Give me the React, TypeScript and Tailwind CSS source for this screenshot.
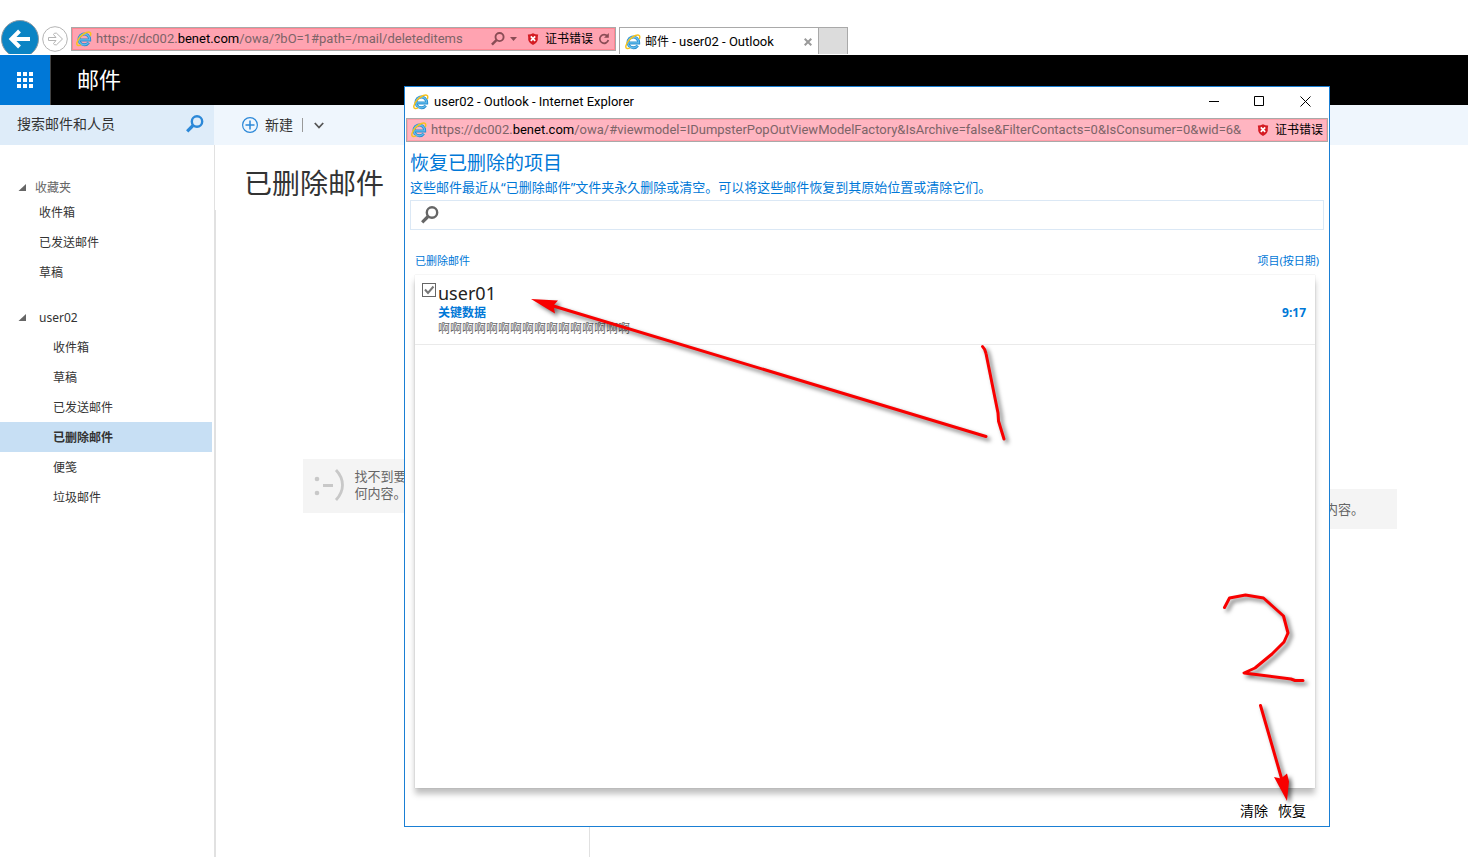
import { useState } from "react";

interface Folder {
  id: string;
  name: string;
}

const favorites: Folder[] = [
  { id: "fav-inbox", name: "收件箱" },
  { id: "fav-sent", name: "已发送邮件" },
  { id: "fav-drafts", name: "草稿" },
];

const mailFolders: Folder[] = [
  { id: "inbox", name: "收件箱" },
  { id: "drafts", name: "草稿" },
  { id: "sent", name: "已发送邮件" },
  { id: "deleted", name: "已删除邮件" },
  { id: "notes", name: "便笺" },
  { id: "junk", name: "垃圾邮件" },
];

const IeLogo = () => (
  <svg className="h-4 w-4 shrink-0" viewBox="0 0 16 16" fill="none">
    <path
      d="M3.800 8.900H13.700A5.400 5.400 0 1 0 12.700 11.600"
      stroke="#2a8fd0"
      strokeWidth="3"
    />
    <path
      d="M3.800 8.900H13.600A5.400 5.400 0 1 0 12.500 11.700"
      stroke="#63bdec"
      strokeWidth="1.300"
    />
    <path
      d="M14.300 5C15.600 1.600 14 .2 10.400 1.500 6 3.200 1.800 8 .9 11.800.4 14.600 2.400 15.200 5 13.800"
      stroke="#f6c21f"
      strokeWidth="1.500"
    />
  </svg>
);

const ShieldIcon = () => (
  <svg className="h-3 w-3 shrink-0" viewBox="0 0 12 12">
    <path
      d="M.8 1.500Q3.500 1.600 6 .2 8.500 1.600 11.200 1.500L10.800 4Q11.500 9.500 6 12 .5 9.500 1.200 4Z"
      fill="#d41c24"
    />
    <path d="M3.800 3.400l4.400 4.400M8.200 3.400l-4.400 4.400" stroke="#fff" strokeWidth="1.700" />
  </svg>
);

const SearchIcon = ({ className }: { className: string }) => (
  <svg className={className} viewBox="0 0 18 18" fill="none">
    <circle cx="11" cy="6.500" r="5.200" stroke="currentColor" strokeWidth="2.400" />
    <path d="M7 10.500L1.200 16.300" stroke="currentColor" strokeWidth="3.200" />
  </svg>
);

const Triangle = () => (
  <svg className="h-2 w-2 shrink-0" viewBox="0 0 8 8">
    <path d="M8 0v7H.5Z" fill="#666" />
  </svg>
);

const BrowserBar = () => (
  <header className="flex h-[55px] items-start overflow-hidden border-b border-white bg-white pt-[27px] text-[13px]">
    <button type="button" aria-label="后退" className="-mt-2 w-10 shrink-0">
      <svg className="h-10 w-10" viewBox="0 0 40 40" fill="none">
        <circle cx="20" cy="20" r="18.500" fill="#0b84c4" stroke="#8c9aa3" />
        <path
          d="M30 20H12M19.500 12L11.500 20l8 8"
          stroke="#fff"
          strokeWidth="4"
        />
      </svg>
    </button>
    <button type="button" aria-label="前进" className="-mt-px ml-0.5 shrink-0">
      <svg className="h-[26px] w-[26px]" viewBox="0 0 26 26" fill="none">
        <circle cx="13" cy="13" r="12.300" stroke="#b4b4b4" />
        <path
          d="M6.500 11.500h7.500L11.500 8.500 12.500 7.200h2L20.500 13l-6 5.800h-2l-1-1.300L14 14.500H6.500Z"
          stroke="#b4b4b4"
        />
      </svg>
    </button>
    <div className="ml-[3px] flex h-6 w-[545px] items-center border border-[#a9a9a9] bg-[#ffa3b1] pl-1 pr-[5px] shadow-[inset_0_0_0_1px_#ff8793]">
      <IeLogo />
      <span className="ml-1 flex-1 whitespace-nowrap font-[Roboto] text-[#7d6468]">
        https://dc002.<span className="text-black">benet.com</span>
        /owa/?bO=1#path=/mail/deleteditems
      </span>
      <button type="button" aria-label="搜索">
        <SearchIcon className="h-[14px] w-[14px] text-[#8a4c55]" />
      </button>
      <svg className="ml-[5px] mr-[10px] h-1 w-[7px]" viewBox="0 0 7 4">
        <path d="M0 0h7L3.500 4Z" fill="#8a4c55" />
      </svg>
      <ShieldIcon />
      <span className="ml-[6px] mr-[5px] text-xs text-black">证书错误</span>
      <button type="button" aria-label="刷新">
        <svg className="h-3 w-3" viewBox="0 0 12 12" fill="none">
          <path
            d="M9.500 3.300A4.300 4.300 0 1 0 10.300 7"
            stroke="#8a4c55"
            strokeWidth="1.700"
          />
          <path d="M10.800 0v4.800H6Z" fill="#8a4c55" />
        </svg>
      </button>
    </div>
    <div className="ml-[3px] flex h-7 w-[200px] items-center border border-b-0 border-[#a9a9a9] pl-[5px] pr-[6px]">
      <IeLogo />
      <span className="ml-1 flex-1 font-[Roboto,'Noto_Sans_CJK_SC',sans-serif] text-black">
        <span className="text-xs">邮件</span> - user02 - Outlook
      </span>
      <button type="button" aria-label="关闭标签页">
        <svg className="h-2 w-2" viewBox="0 0 8 8">
          <path d="M.7.7l6.600 6.600M7.300.7L.7 7.300" stroke="#9a9a9a" strokeWidth="2" />
        </svg>
      </button>
    </div>
    <button
      type="button"
      aria-label="新建标签页"
      className="h-7 w-[29px] border border-b-0 border-l-0 border-[#a9a9a9] bg-[#dcdcdc]"
    />
  </header>
);

const Sidebar = () => {
  const [selected, setSelected] = useState("deleted");

  return (
    <nav className="w-[212px] pt-8 text-xs text-[#333]">
      <div className="flex h-5 items-center pl-[18px] pt-px text-[#666]">
        <Triangle />
        <span className="ml-[9px]">收藏夹</span>
      </div>
      {favorites.map((folder) => (
        <button
          key={folder.id}
          type="button"
          onClick={() => setSelected(folder.id)}
          className={`flex h-[30px] w-full items-center pl-[39px] pt-0.5 ${
            selected === folder.id ? "bg-[#c7dff4] font-bold" : ""
          }`}
        >
          {folder.name}
        </button>
      ))}
      <div className="mt-[15px] flex h-[30px] items-center pl-[18px] pt-0.5">
        <Triangle />
        <span className="ml-[13px]">user02</span>
      </div>
      {mailFolders.map((folder) => (
        <button
          key={folder.id}
          type="button"
          onClick={() => setSelected(folder.id)}
          className={`flex h-[30px] w-full items-center pl-[53px] pt-0.5 ${
            selected === folder.id ? "bg-[#c7dff4] font-bold" : ""
          }`}
        >
          {folder.name}
        </button>
      ))}
    </nav>
  );
};

const RecoverWindow = () => {
  const [checked, setChecked] = useState(true);

  return (
    <section className="absolute left-[404px] right-[138px] top-[86px] flex h-[741px] flex-col border border-[#1a7fd4] bg-white">
      <div className="flex h-[31px] shrink-0 items-center pb-0.5 pl-2 text-[13px] text-black">
        <IeLogo />
        <span className="ml-[5px] flex-1 font-[Roboto]">
          user02 - Outlook - Internet Explorer
        </span>
        <div className="flex">
          <button
            type="button"
            aria-label="最小化"
            className="flex h-[29px] w-[45px] items-center justify-center"
          >
            <svg className="h-[11px] w-[11px]" viewBox="0 0 11 11">
              <path d="M0 5.500h10" stroke="#000" />
            </svg>
          </button>
          <button
            type="button"
            aria-label="最大化"
            className="flex h-[29px] w-[45px] items-center justify-center"
          >
            <svg className="h-[11px] w-[11px]" viewBox="0 0 11 11" fill="none">
              <path d="M.5.5h9v9h-9Z" stroke="#000" />
            </svg>
          </button>
          <button
            type="button"
            aria-label="关闭"
            className="flex h-[29px] w-[47px] items-center justify-center"
          >
            <svg className="h-[11px] w-[11px]" viewBox="0 0 11 11">
              <path d="M.5.5l10 10M10.500.5l-10 10" stroke="#000" />
            </svg>
          </button>
        </div>
      </div>

      <div className="mx-px flex h-6 shrink-0 items-center border border-[#a9a9a9] bg-[#ffb5c1] pl-1 pr-1 text-[13px] shadow-[inset_0_0_0_1px_#ff9faa]">
        <IeLogo />
        <span className="ml-1 flex-1 whitespace-nowrap font-[Roboto] text-[#7d6468]">
          https://dc002.<span className="text-black">benet.com</span>
          /owa/#viewmodel=IDumpsterPopOutViewModelFactory&amp;IsArchive=false&amp;FilterContacts=0&amp;IsConsumer=0&amp;wid=6&amp;
        </span>
        <ShieldIcon />
        <span className="ml-[6px] text-xs text-black">证书错误</span>
      </div>

      <div className="flex flex-1 flex-col px-[5px] text-[#0078d7]">
        <h2 className="mt-2 text-[19px] leading-[27px]">恢复已删除的项目</h2>
        <p className="text-[13px] leading-5">
          这些邮件最近从“已删除邮件”文件夹永久删除或清空。可以将这些邮件恢复到其原始位置或清除它们。
        </p>
        <label className="mt-[3px] flex h-[30px] items-center border border-[#dbe8f5] pl-[10px]">
          <SearchIcon className="h-[18px] w-[18px] shrink-0 text-[#666]" />
          <input
            type="text"
            aria-label="搜索已删除的项目"
            className="ml-2 w-full text-[13px] text-[#333] outline-none"
          />
        </label>

        <div className="mt-[21px] flex h-5 items-center justify-between px-[5px] text-[11px]">
          <span>已删除邮件</span>
          <button type="button">项目(按日期)</button>
        </div>

        <div className="ml-[5px] mr-[9px] mt-1 flex-1 bg-white shadow-[0_6px_6px_rgba(0,0,0,0.25),0_0_1px_rgba(0,0,0,0.2)]">
          <div className="flex h-[70px] items-start border-b border-[#eaeaea] pl-[7px] pr-[9px] pt-2">
            <label htmlFor="msg-user01" className="grid">
              <input
                id="msg-user01"
                type="checkbox"
                aria-label="user01"
                checked={checked}
                onChange={() => setChecked(!checked)}
                className="col-start-1 row-start-1 h-[14px] w-[14px] appearance-none border border-[#666] bg-white"
              />
              {checked && (
                <svg
                  className="pointer-events-none col-start-1 row-start-1 h-[14px] w-[14px]"
                  viewBox="0 0 14 14"
                  fill="none"
                >
                  <path d="M3 6.500l3 3.500 5.500-6.500" stroke="#777" strokeWidth="2" />
                </svg>
              )}
            </label>
            <div className="ml-0.5 flex-1">
              <div className="text-lg leading-5 text-[#222]">user01</div>
              <div className="flex justify-between text-xs font-bold leading-5">
                <span>关键数据</span>
                <span>9:17</span>
              </div>
              <div className="text-xs leading-3 text-[#666]">
                啊啊啊啊啊啊啊啊啊啊啊啊啊啊啊啊
              </div>
            </div>
          </div>
        </div>

        <div className="flex h-[38px] items-center justify-end gap-[10px] pr-[18px] pt-2 text-sm text-black">
          <button type="button">清除</button>
          <button type="button">恢复</button>
        </div>
      </div>
    </section>
  );
};

// Hand-drawn marks for the two steps: tick the message, then recover it
const Annotations = () => (
  <svg
    className="pointer-events-none absolute left-0 top-0 h-[857px] w-[1468px]"
    viewBox="0 0 1468 857"
    fill="none"
    stroke="#f80000"
    strokeWidth="3"
    strokeLinecap="round"
    strokeLinejoin="round"
    style={{ filter: "drop-shadow(3px 3px 2px rgba(0,0,0,0.55))" }}
  >
    <path d="M986 436.500L550 305" />
    <path d="M531 299l27 1.500-4.500 5 1.500 8Z" fill="#f80000" stroke="none" />
    <path d="M982.500 346.500q3 3 3.500 7L998 413l.5 8 5.500 18" />
    <path d="M1224.500 607.500l5-9.500 16-3 18 3 20 18 4.500 17-4 9-12 12-17 14-11 5 47 6 4 1.500h8" />
    <path d="M1260.500 705.500L1282 780" />
    <path d="M1287 801l-13-24 7 1.500 6-5 2 8Z" fill="#f80000" stroke="none" />
  </svg>
);

export default function App() {
  return (
    <div className="relative flex min-h-screen flex-col overflow-hidden bg-white font-['Noto_Sans','Noto_Sans_CJK_SC',sans-serif]">
      <BrowserBar />

      <div className="flex h-[50px] shrink-0 items-stretch bg-black">
        <button
          type="button"
          aria-label="应用启动器"
          className="flex w-[51px] items-center justify-center border-r border-[#444] bg-[#0078d7]"
        >
          <svg className="h-4 w-4" viewBox="0 0 16 16" fill="#fff">
            <path d="M0 0h4v4H0ZM6 0h4v4H6ZM12 0h4v4h-4ZM0 6h4v4H0ZM6 6h4v4H6ZM12 6h4v4h-4ZM0 12h4v4H0ZM6 12h4v4H6ZM12 12h4v4h-4Z" />
          </svg>
        </button>
        <h1 className="flex items-center pb-0.5 pl-[26px] text-[22px] text-white">
          邮件
        </h1>
      </div>

      <div className="flex h-10 shrink-0 bg-[#eff6fd]">
        <div className="flex w-[214px] items-center bg-[#deecf9] pb-0.5 pl-[17px] pr-[10px]">
          <input
            type="text"
            aria-label="搜索邮件和人员"
            placeholder="搜索邮件和人员"
            className="min-w-0 flex-1 bg-transparent text-sm text-[#333] outline-none placeholder:text-[#333]"
          />
          <button type="button" aria-label="搜索">
            <SearchIcon className="h-[18px] w-[18px] text-[#2b88d8]" />
          </button>
        </div>
        <div className="flex items-center pl-7 text-sm text-[#333]">
          <button type="button" className="flex items-center">
            <svg className="mr-[7px] h-4 w-4" viewBox="0 0 16 16" fill="none">
              <circle cx="8" cy="8" r="7.400" stroke="#2b88d8" strokeWidth="1.200" />
              <path d="M8 3.500v9M3.500 8h9" stroke="#2b88d8" strokeWidth="1.500" />
            </svg>
            新建
          </button>
          <span className="ml-[9px] h-[14px] w-px bg-[#999]" />
          <button type="button" aria-label="更多选项" className="ml-[11px]">
            <svg className="h-[7px] w-[10px]" viewBox="0 0 10 7" fill="none">
              <path d="M.8 1L5 5.500 9.200 1" stroke="#555" strokeWidth="1.800" />
            </svg>
          </button>
        </div>
      </div>

      <main className="flex flex-1 items-stretch">
        <div className="w-[215px] shrink-0 border-r border-[#e1e1e1]">
          <Sidebar />
        </div>
        <div className="flex w-[375px] shrink-0 flex-col border-r border-[#e1e1e1]">
          <h2 className="flex h-[65px] items-center pl-[29px] pt-[10px] text-[28px] text-[#333]">
            已删除邮件
          </h2>
          <div className="flex flex-1 flex-col items-center border-l border-[#e1e1e1] pt-[249px]">
            <div className="flex h-[54px] w-[200px] items-center bg-[#f4f4f4] pb-0.5 pl-[11px] pr-8">
              <svg
                className="h-8 w-[30px] shrink-0"
                viewBox="0 0 30 32"
                fill="none"
                stroke="#c8c8c8"
                strokeWidth="2.800"
              >
                <circle cx="3" cy="10" r="2.300" fill="#c8c8c8" stroke="none" />
                <circle cx="3" cy="24" r="2.300" fill="#c8c8c8" stroke="none" />
                <path d="M9 16.500h10M22 1q6.500 7 6.500 15t-6.500 15" />
              </svg>
              <p className="ml-[11px] text-[13px] leading-[17px] text-[#666]">
                找不到要显示的任何内容。
              </p>
            </div>
          </div>
        </div>
        <div className="flex flex-1 items-start pl-[71px] pr-[71px] pt-[344px]">
          <p className="flex h-10 flex-1 items-center justify-end bg-[#f4f4f4] pr-[33px] pt-0.5 text-[13px] text-[#666]">
            找不到要显示的任何内容。
          </p>
        </div>
      </main>

      <RecoverWindow />
      <Annotations />
    </div>
  );
}
